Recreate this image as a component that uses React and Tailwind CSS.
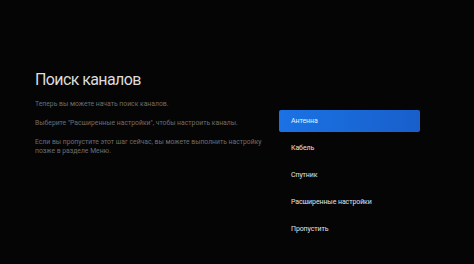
import React from "react";

// Пункты меню справа
const options = ["Антенна", "Кабель", "Спутник", "Расширенные настройки", "Пропустить"];

export default function App() {
  return (
    <div className="w-[474px] h-[264px] overflow-hidden bg-[#050505] flex items-start font-['Roboto',sans-serif] antialiased">
      {/* Левая колонка: заголовок и описание */}
      <div className="w-[279px] pl-[35px] pt-[70px] shrink-0">
        <h1 className="text-[16px] leading-[20px] tracking-[-0.6px] text-[#dcdcdc] font-normal whitespace-nowrap">
          Поиск каналов
        </h1>
        <div className="mt-[10px] flex flex-col gap-[10px] text-[6.8px] leading-[9px] text-[#6e6e6e] whitespace-nowrap">
          <p>Теперь вы можете начать поиск каналов.</p>
          <p>Выберите "Расширенные настройки", чтобы настроить каналы.</p>
          <p>
            Если вы пропустите этот шаг сейчас, вы можете выполнить настройку
            <br />
            позже в разделе Меню.
          </p>
        </div>
      </div>

      {/* Правая колонка: варианты */}
      <div className="w-[141px] mt-[110px] flex flex-col gap-[5px]">
        {options.map((item, i) => (
          <div
            key={item}
            className={`h-[22px] flex items-center pl-[12px] text-[7px] tracking-[-0.1px] whitespace-nowrap ${
              i === 0
                ? "rounded-[2px] bg-gradient-to-r from-[#1b72e4] to-[#185fcb] text-[#e8eefa]"
                : "text-[#e2e2e2]"
            }`}
          >
            {item}
          </div>
        ))}
      </div>
    </div>
  );
}
